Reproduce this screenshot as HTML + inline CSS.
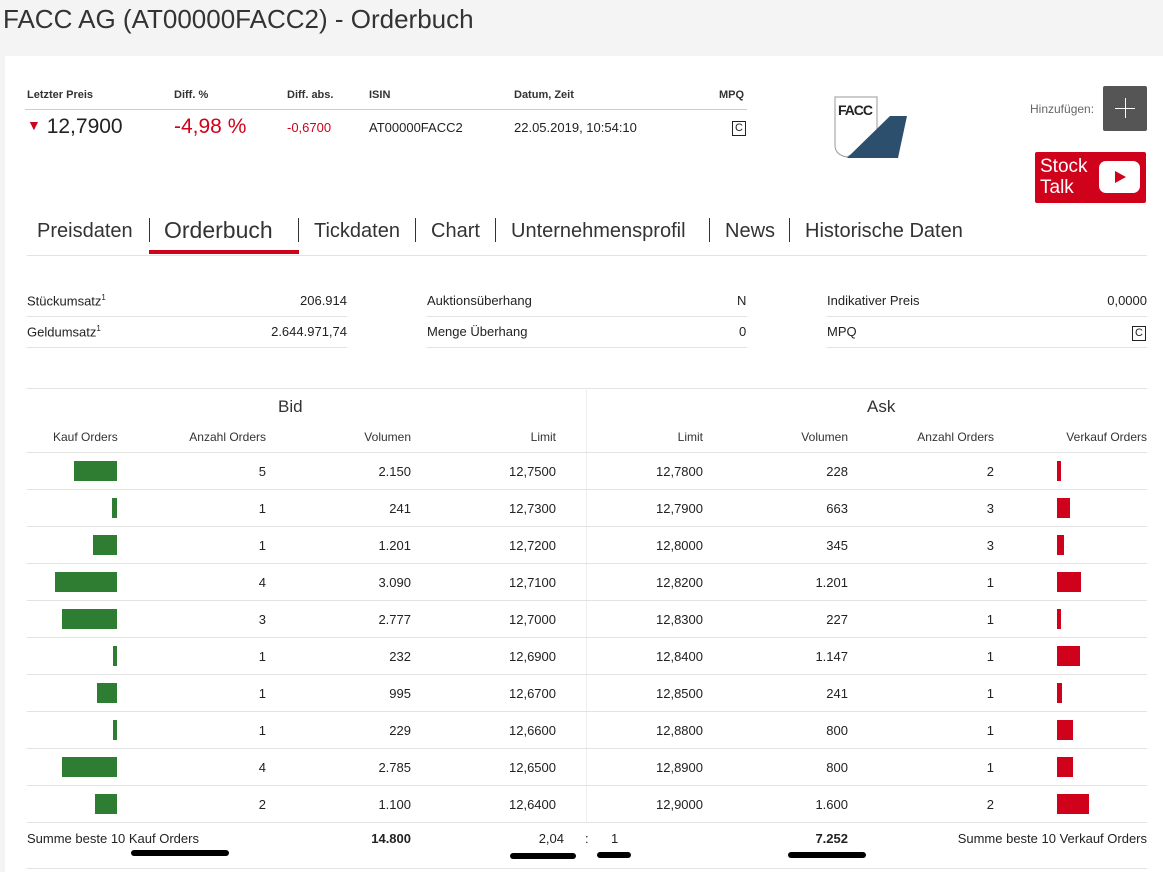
<!DOCTYPE html><html><head><meta charset="utf-8"><style>
*{margin:0;padding:0;box-sizing:border-box}
body{width:1163px;height:872px;background:#f4f4f5;font-family:"Liberation Sans",sans-serif;color:#222;position:relative;overflow:hidden;font-size:13px}
.a{position:absolute;white-space:nowrap}
.card{position:absolute;left:5px;top:56px;width:1158px;height:816px;background:#fff}
.r{text-align:right}
.hl{position:absolute;height:1px;background:#e3e3e3}
.g{position:absolute;background:#2e7d32;height:20px}
.rd{position:absolute;background:#d0021b;height:20px}
.box{display:inline-block;border:1px solid #222;font-size:11px;line-height:13px;padding:0 2px}
.mk{position:absolute;background:#000;height:6px;border-radius:3px}
.tab{position:absolute;white-space:nowrap;font-size:20px;color:#333;top:220px}
</style></head><body>
<div class="a" style="left:3px;top:4px;font-size:26px;color:#333">FACC AG (AT00000FACC2) - Orderbuch</div>
<div class="card"></div>
<div class="a" style="left:27px;top:89px;font-size:11px;font-weight:bold;color:#333">Letzter Preis</div>
<div class="a" style="left:174px;top:89px;font-size:11px;font-weight:bold;color:#333">Diff. %</div>
<div class="a" style="left:287px;top:89px;font-size:11px;font-weight:bold;color:#333">Diff. abs.</div>
<div class="a" style="left:369px;top:89px;font-size:11px;font-weight:bold;color:#333">ISIN</div>
<div class="a" style="left:514px;top:89px;font-size:11px;font-weight:bold;color:#333">Datum, Zeit</div>
<div class="a" style="left:719px;top:89px;font-size:11px;font-weight:bold;color:#333">MPQ</div>
<div class="hl" style="left:25px;top:109px;width:722px;background:#ccc"></div>
<div class="a" style="left:27px;top:115px;font-size:21px"><span style="color:#d0021b;font-size:14px;vertical-align:3px">▼</span> 12,7900</div>
<div class="a" style="left:174px;top:115px;font-size:21px;color:#d0021b">-4,98 %</div>
<div class="a" style="left:287px;top:120px;font-size:13px;color:#d0021b">-0,6700</div>
<div class="a" style="left:369px;top:120px">AT00000FACC2</div>
<div class="a" style="left:514px;top:120px">22.05.2019, 10:54:10</div>
<div class="a" style="left:732px;top:119px"><span class="box">C</span></div>
<svg class="a" style="left:833px;top:95px" width="76" height="65"><path d="M2 2H44V46L14 62Q2 60 2 50Z" fill="#fff" stroke="#999"/><text x="5" y="20" font-family="Liberation Sans" font-weight="bold" font-size="14" fill="#222" textLength="35">FACC</text><path d="M14 63L57 21H74L65 63Z" fill="#2c4f6e"/></svg>
<div class="a" style="left:1030px;top:102px;font-size:12px;color:#666">Hinzufügen:</div>
<div class="a" style="left:1103px;top:86px;width:44px;height:45px;background:#555;border-radius:2px"></div>
<div class="a" style="left:1115px;top:108px;width:20px;height:1px;background:#fff"></div>
<div class="a" style="left:1125px;top:98px;width:1px;height:20px;background:#fff"></div>
<div class="a" style="left:1035px;top:152px;width:111px;height:51px;background:#d0021b;border-radius:2px"></div>
<div class="a" style="left:1040px;top:156px;color:#fff;font-size:19px;line-height:21px">Stock<br>Talk</div>
<svg class="a" style="left:1099px;top:161px" width="41" height="32"><rect width="41" height="32" rx="7" fill="#fff"/><path d="M16 10L27 16L16 22Z" fill="#d0021b"/></svg>
<div class="tab" style="left:37px">Preisdaten</div>
<div class="a" style="left:149px;top:218px;width:1px;height:24px;background:#333"></div>
<div class="tab" style="left:164px;top:217px;font-size:23px">Orderbuch</div>
<div class="a" style="left:149px;top:250px;width:150px;height:4px;background:#d0021b"></div>
<div class="a" style="left:298px;top:218px;width:1px;height:24px;background:#333"></div>
<div class="tab" style="left:314px">Tickdaten</div>
<div class="a" style="left:415px;top:218px;width:1px;height:24px;background:#333"></div>
<div class="tab" style="left:431px">Chart</div>
<div class="a" style="left:495px;top:218px;width:1px;height:24px;background:#333"></div>
<div class="tab" style="left:511px">Unternehmensprofil</div>
<div class="a" style="left:709px;top:218px;width:1px;height:24px;background:#333"></div>
<div class="tab" style="left:725px">News</div>
<div class="a" style="left:789px;top:218px;width:1px;height:24px;background:#333"></div>
<div class="tab" style="left:805px">Historische Daten</div>
<div class="hl" style="left:27px;top:255px;width:1120px"></div>
<div class="a" style="left:27px;top:293px">Stückumsatz<sup style="font-size:8px">1</sup></div>
<div class="a r" style="left:247px;top:293px;width:100px">206.914</div>
<div class="a" style="left:27px;top:324px">Geldumsatz<sup style="font-size:8px">1</sup></div>
<div class="a r" style="left:197px;top:324px;width:150px">2.644.971,74</div>
<div class="hl" style="left:27px;top:316px;width:320px"></div><div class="hl" style="left:27px;top:347px;width:320px"></div>
<div class="a" style="left:427px;top:293px">Auktionsüberhang</div><div class="a" style="left:737px;top:293px">N</div>
<div class="a" style="left:427px;top:324px">Menge Überhang</div><div class="a" style="left:739px;top:324px">0</div>
<div class="hl" style="left:427px;top:316px;width:320px"></div><div class="hl" style="left:427px;top:347px;width:320px"></div>
<div class="a" style="left:827px;top:293px">Indikativer Preis</div><div class="a r" style="left:1047px;top:293px;width:100px">0,0000</div>
<div class="a" style="left:827px;top:324px">MPQ</div><div class="a" style="left:1132px;top:324px"><span class="box">C</span></div>
<div class="hl" style="left:827px;top:316px;width:320px"></div><div class="hl" style="left:827px;top:347px;width:320px"></div>
<div class="hl" style="left:27px;top:388px;width:1120px"></div>
<div class="a" style="left:586px;top:388px;width:1px;height:435px;background:#eee"></div>
<div class="a" style="left:278px;top:397px;font-size:17px;color:#333">Bid</div>
<div class="a" style="left:867px;top:397px;font-size:17px;color:#333">Ask</div>
<div style="font-size:12px;color:#333">
<div class="a" style="left:53px;top:430px">Kauf Orders</div>
<div class="a r" style="left:166px;top:430px;width:100px">Anzahl Orders</div>
<div class="a r" style="left:311px;top:430px;width:100px">Volumen</div>
<div class="a r" style="left:456px;top:430px;width:100px">Limit</div>
<div class="a r" style="left:603px;top:430px;width:100px">Limit</div>
<div class="a r" style="left:748px;top:430px;width:100px">Volumen</div>
<div class="a r" style="left:894px;top:430px;width:100px">Anzahl Orders</div>
<div class="a r" style="left:1047px;top:430px;width:100px">Verkauf Orders</div>
</div>
<div id="rows"></div>
<script>
var d=[[43,5,"2.150","12,7500","12,7800","228",2,4],[5,1,"241","12,7300","12,7900","663",3,13],[24,1,"1.201","12,7200","12,8000","345",3,7],[62,4,"3.090","12,7100","12,8200","1.201",1,24],[55,3,"2.777","12,7000","12,8300","227",1,4],[4,1,"232","12,6900","12,8400","1.147",1,23],[20,1,"995","12,6700","12,8500","241",1,5],[4,1,"229","12,6600","12,8800","800",1,16],[55,4,"2.785","12,6500","12,8900","800",1,16],[22,2,"1.100","12,6400","12,9000","1.600",2,32]];
var h='<div class="hl" style="left:27px;top:452px;width:1120px"></div>';
d.forEach(function(r,i){var y=452+i*37,t=y+12;
h+='<div class="g" style="left:'+(117-r[0])+'px;top:'+(y+9)+'px;width:'+r[0]+'px"></div>'+
'<div class="a r" style="left:166px;top:'+t+'px;width:100px">'+r[1]+'</div>'+
'<div class="a r" style="left:311px;top:'+t+'px;width:100px">'+r[2]+'</div>'+
'<div class="a r" style="left:456px;top:'+t+'px;width:100px">'+r[3]+'</div>'+
'<div class="a r" style="left:603px;top:'+t+'px;width:100px">'+r[4]+'</div>'+
'<div class="a r" style="left:748px;top:'+t+'px;width:100px">'+r[5]+'</div>'+
'<div class="a r" style="left:894px;top:'+t+'px;width:100px">'+r[6]+'</div>'+
'<div class="rd" style="left:1057px;top:'+(y+9)+'px;width:'+r[7]+'px"></div>'+
'<div class="hl" style="left:27px;top:'+(y+37)+'px;width:1120px"></div>';});
document.getElementById('rows').innerHTML=h;
</script>
<div class="a" style="left:27px;top:831px">Summe beste 10 Kauf Orders</div>
<div class="a r" style="left:311px;top:831px;width:100px;font-weight:bold">14.800</div>
<div class="a r" style="left:464px;top:831px;width:100px">2,04</div>
<div class="a" style="left:585px;top:831px">:</div>
<div class="a" style="left:611px;top:831px">1</div>
<div class="a r" style="left:748px;top:831px;width:100px;font-weight:bold">7.252</div>
<div class="a r" style="left:897px;top:831px;width:250px">Summe beste 10 Verkauf Orders</div>
<div class="mk" style="left:131px;top:850px;width:98px"></div>
<div class="mk" style="left:510px;top:853px;width:66px"></div>
<div class="mk" style="left:597px;top:852px;width:34px"></div>
<div class="mk" style="left:788px;top:852px;width:78px"></div>
<div class="hl" style="left:27px;top:868px;width:1120px"></div>
</body></html>
